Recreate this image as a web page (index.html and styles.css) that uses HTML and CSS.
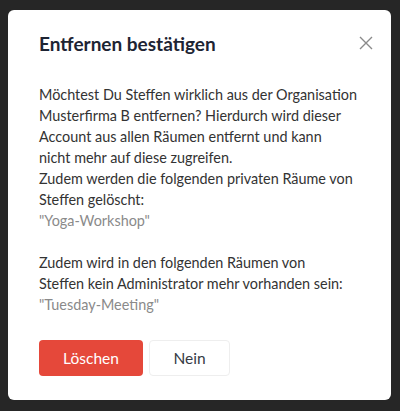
FILE: index.html
```html
<!DOCTYPE html>
<html lang="de">
<head>
  <meta charset="UTF-8" />
  <meta name="viewport" content="width=device-width, initial-scale=1.0" />
  <title>Entfernen bestätigen</title>
  <link rel="stylesheet" href="styles.css">
</head>
<body>
  <div class="modal">
    <div class="modal-header">
      <h2>Entfernen bestätigen</h2>
      <button class="close" aria-label="Schließen">
        <svg width="14" height="14" viewBox="0 0 14 14">
          <path d="M1 1 L13 13 M13 1 L1 13" stroke="#8a8a8a" stroke-width="1.4" fill="none" />
        </svg>
      </button>
    </div>

    <div class="modal-body">
      <p>Möchtest Du Steffen wirklich aus der Organisation<br>Musterfirma B entfernen? Hierdurch wird dieser<br>Account aus allen Räumen entfernt und kann<br>nicht mehr auf diese zugreifen.</p>
      <p>Zudem werden die folgenden privaten Räume von<br>Steffen gelöscht:</p>
      <p class="raum">"Yoga-Workshop"</p>
      <p class="abstand">Zudem wird in den folgenden Räumen von<br>Steffen kein Administrator mehr vorhanden sein:</p>
      <p class="raum">"Tuesday-Meeting"</p>
    </div>

    <div class="modal-footer">
      <button class="btn btn-danger">Löschen</button>
      <button class="btn btn-light">Nein</button>
    </div>
  </div>
</body>
</html>
```

FILE: styles.css
```css
body {
  margin: 0;
  padding: 10px 9px 11px 8px;
  background: #262626;
  font-family: Lato, "Open Sans", sans-serif;
}
.modal {
  background: #fff;
  border-radius: 6px;
  height: 390px;
  box-sizing: border-box;
  padding: 21px 18px 0 31px;
}
.modal-header {
  display: flex;
  justify-content: space-between;
  align-items: center;
  height: 24px;
}
.modal-header h2 {
  margin: 0;
  font-size: 19px;
  font-weight: 700;
  color: #1d2433;
}
.close {
  background: none;
  border: 0;
  padding: 0;
  display: flex;
}
.modal-body {
  margin-top: 29px;
  color: #333;
  font-size: 14.4px;
  line-height: 21px;
  white-space: nowrap;
}
.modal-body p {
  margin: 0;
}
.raum {
  color: #8a8a8a;
}
.abstand {
  margin-top: 21px !important;
}
.modal-footer {
  display: flex;
  gap: 6px;
  margin-top: 25px;
}
.btn {
  font-family: inherit;
  font-size: 15.5px;
  height: 36px;
  border-radius: 4px;
  cursor: pointer;
}
.btn-danger {
  width: 104px;
  background: #e5483a;
  color: #fff;
  border: 0;
}
.btn-light {
  width: 81px;
  background: #fff;
  color: #363b45;
  border: 1px solid #eeeeee;
}
```
